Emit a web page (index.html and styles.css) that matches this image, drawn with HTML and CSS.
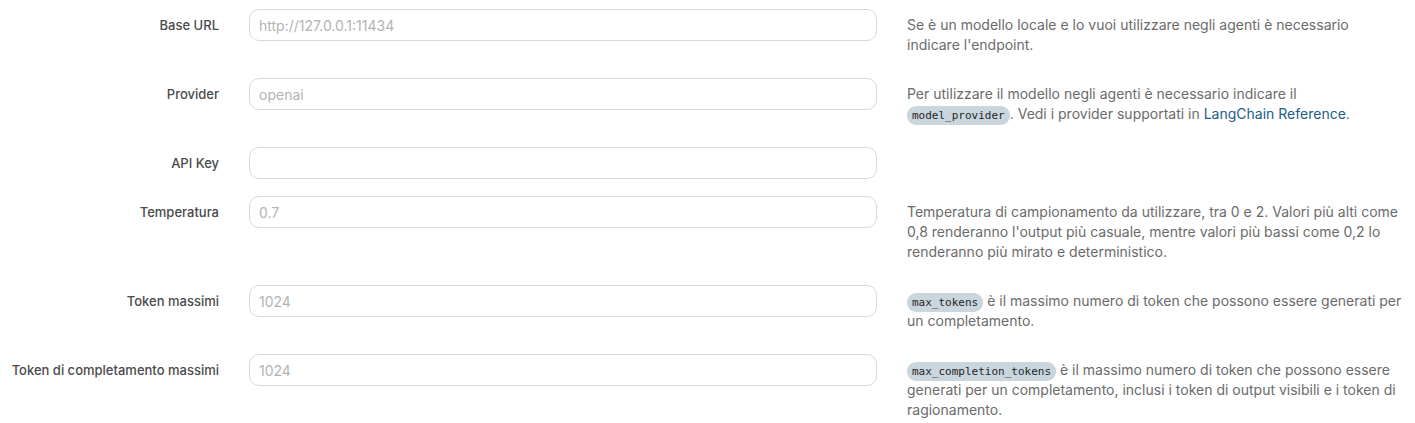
FILE: index.html
```html
<!DOCTYPE html>
<html>

<head>
    <title>Impostazioni modello</title>
    <link rel="stylesheet" href="styles.css">
</head>

<body>
    <form class="settings">
        <label class="field-label" for="base-url">Base URL</label>
        <input class="field-input" id="base-url" type="text" placeholder="http://127.0.0.1:11434" />
        <p class="field-help">
            Se è un modello locale e lo vuoi utilizzare negli agenti è necessario
            indicare l'endpoint.
        </p>

        <label class="field-label" for="provider">Provider</label>
        <input class="field-input" id="provider" type="text" placeholder="openai" />
        <p class="field-help">
            Per utilizzare il modello negli agenti è necessario indicare il
            <code>model_provider</code>. Vedi i provider supportati in
            <a href="#">LangChain Reference</a>.
        </p>

        <label class="field-label" for="api-key">API Key</label>
        <input class="field-input" id="api-key" type="password" />
        <p class="field-help empty"></p>

        <label class="field-label" for="temperature">Temperatura</label>
        <input class="field-input" id="temperature" type="text" placeholder="0.7" />
        <p class="field-help">
            Temperatura di campionamento da utilizzare, tra 0 e 2. Valori più alti come
            0,8 renderanno l'output più casuale, mentre valori più bassi come 0,2 lo
            renderanno più mirato e deterministico.
        </p>

        <label class="field-label" for="max-tokens">Token massimi</label>
        <input class="field-input" id="max-tokens" type="text" placeholder="1024" />
        <p class="field-help">
            <code>max_tokens</code> è il massimo numero di token che possono essere generati per
            un completamento.
        </p>

        <label class="field-label" for="max-completion">Token di completamento massimi</label>
        <input class="field-input" id="max-completion" type="text" placeholder="1024" />
        <p class="field-help">
            <code>max_completion_tokens</code> è il massimo numero di token che possono essere
            generati per un completamento, inclusi i token di output visibili e i token di
            ragionamento.
        </p>
    </form>
</body>

</html>
```

FILE: styles.css
```css
body {
    margin: 0;
    background: #fff;
    font-family: Inter, "Noto Sans", sans-serif;
}

.settings {
    display: grid;
    grid-template-columns: 211px 628px 1fr;
    column-gap: 30px;
    row-gap: 17px;
    align-items: start;
    padding: 9px 11px 0 8px;
}

.field-label {
    font-size: 13px;
    font-weight: 500;
    color: #4a4a4a;
    line-height: 32px;
    text-align: right;
    white-space: nowrap;
}

.field-input {
    box-sizing: border-box;
    height: 32px;
    width: 100%;
    margin: 0;
    padding: 0 9px;
    border: 1px solid #d3dae1;
    border-radius: 10px;
    font-family: Inter, "Noto Sans", sans-serif;
    font-size: 14px;
    color: #333;
    background: #fff;
    outline: none;
}

.field-input::placeholder {
    color: #b3b3b3;
}

.field-help {
    margin: 6px 0 6px 0;
    font-size: 14px;
    line-height: 20px;
    color: #6b6b6b;
}

.field-help.empty {
    margin: 0;
}

.field-help code {
    font-family: "DejaVu Sans Mono", monospace;
    font-size: 11px;
    line-height: 14px;
    padding: 3px 5px;
    border-radius: 9px;
    background: #c9d6de;
    color: #1f1f1f;
}

.field-help a {
    color: #215d86;
    text-decoration: none;
}
```
